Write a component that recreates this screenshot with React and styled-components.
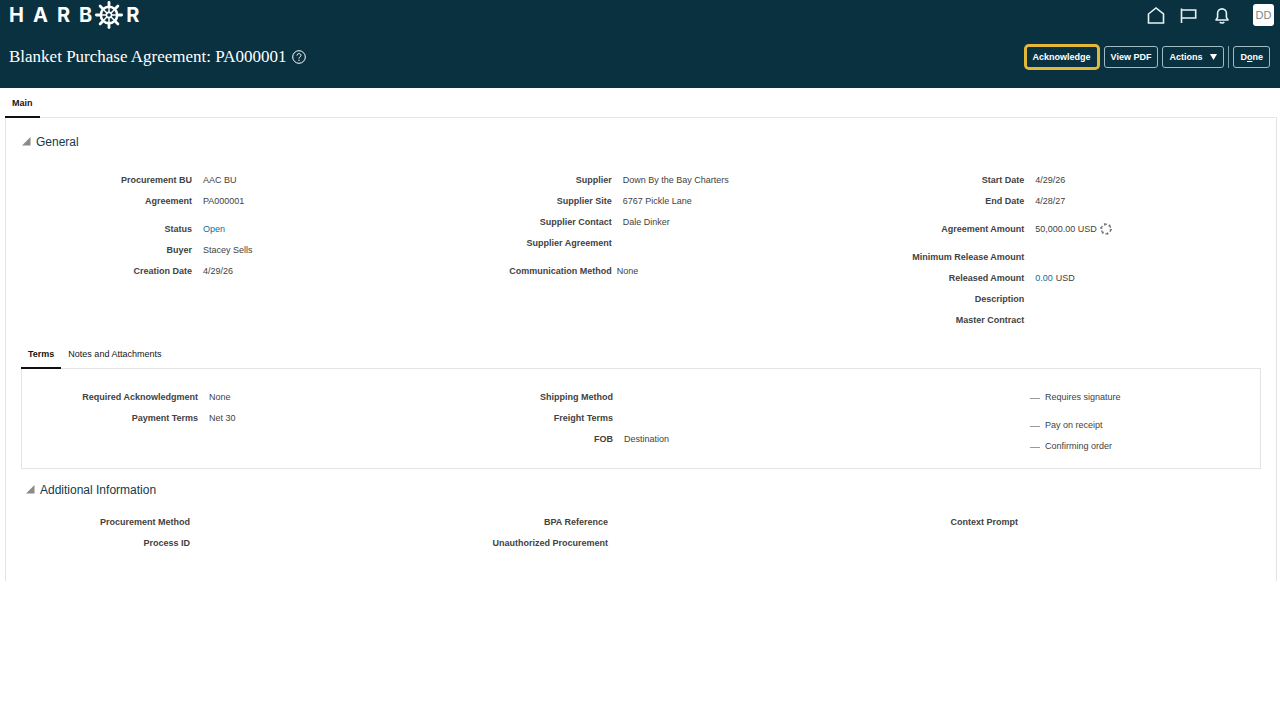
import { useState } from "react";
import styled, { createGlobalStyle, css } from "styled-components";

const GlobalStyle = createGlobalStyle`
  * {
    box-sizing: border-box;
  }
  body {
    margin: 0;
    background: #ffffff;
    color: #424242;
    font-family: "Liberation Sans", Arial, sans-serif;
    font-size: 9px;
    line-height: 12px;
  }
  button {
    font: inherit;
    color: inherit;
    cursor: pointer;
  }
  a {
    color: #0f6f99;
    text-decoration: none;
  }
`;

// Header
const Header = styled.header`
  background-color: #0a3140;
  color: white;
  height: 88px;
`;
const HeaderRow = styled.div`
  display: flex;
  align-items: center;
  justify-content: space-between;
`;
const TopBar = styled(HeaderRow)`
  height: 30px;
  padding: 0 6px 0 9px;
`;
const TitleBar = styled(HeaderRow)`
  height: 54px;
  padding: 0 10px 0 9px;
`;
const Logo = styled.a`
  display: flex;
  align-items: center;
  gap: 2px;
  color: white;
  font-family: Inter, sans-serif;
  font-size: 20px;
  font-weight: 700;
  line-height: 30px;
`;
const Letters = styled.span`
  display: flex;
  gap: 9px;
`;
const IconBar = styled.nav`
  display: flex;
  align-items: center;
`;
const IconButton = styled.button`
  display: flex;
  padding: 0;
  margin-right: 13px;
  border: 0;
  background: none;
  color: #e6f3f5;
`;
const Avatar = styled.button`
  width: 21px;
  height: 22px;
  margin-left: 8px;
  padding: 0;
  border: 0;
  border-radius: 3px;
  background-color: white;
  && {
    font-size: 11px;
    color: #7d878b;
  }
`;
const PageTitle = styled.h1`
  display: flex;
  align-items: center;
  gap: 6px;
  margin: 0;
  font-family: Georgia, "Liberation Serif", serif;
  font-size: 17px;
  font-weight: 400;
  line-height: 20px;
`;
const Toolbar = styled.div`
  display: flex;
  align-items: center;
  gap: 4px;
`;
const ToolButton = styled.button`
  display: flex;
  align-items: center;
  gap: 8px;
  height: 22px;
  padding: 0 6px;
  border: 1px solid #9dbcc6;
  border-radius: 3px;
  background: none;
  && {
    color: white;
    font-weight: 700;
  }
  ${(props) =>
    props.$highlight &&
    css`
      height: 20px;
      padding: 0 5px;
      border-color: #0a3140;
      border-radius: 2px;
      margin-right: 3px;
      box-shadow: 0 0 0 3px #e3b83a;
    `}
`;
const Divider = styled.span`
  width: 1px;
  height: 22px;
  background-color: #7fa0ab;
`;

// Tabs
const TabList = styled.div`
  display: flex;
  height: 30px;
  border-bottom: 1px solid #e4e4e4;
`;
const MainTabs = styled(TabList)`
  margin: 0 3px 0 5px;
`;
const Tab = styled.button`
  height: 30px;
  padding: 2px 7px 0;
  border: 0;
  border-bottom: 2px solid ${(props) => (props.$active ? "#111111" : "transparent")};
  background: none;
  && {
    color: #161513;
    font-weight: ${(props) => (props.$active ? 700 : 400)};
  }
`;

// Content
const Panel = styled.main`
  margin: 0 3px 0 5px;
  padding: 14px 15px 28px;
  border: solid #e4e4e4;
  border-width: 0 1px;
`;
const SectionTitle = styled.h2`
  margin: 0 0 0 ${(props) => (props.$indent ? "4px" : "0")};
  font-size: 12px;
  font-weight: 400;
  line-height: 20px;
  color: #13394b;
`;
const Disclosure = styled.button`
  display: flex;
  align-items: center;
  gap: 5px;
  padding: 0;
  border: 0;
  background: none;
`;
const Columns = styled.div`
  display: grid;
  grid-template-columns: ${(props) => props.$tracks};
  margin-left: ${(props) => props.$inset || "0"};
`;
const General = styled(Columns)`
  padding: 17px 0 9px;
`;
const Additional = styled(Columns)`
  padding-top: 11px;
`;
const TermsBox = styled.section`
  margin-bottom: 11px;
  padding: 17px 0 12px;
  border: 1px solid #e4e4e4;
  border-top: 0;
`;
const FieldList = styled.dl`
  margin: 0;
`;
const Field = styled.div`
  display: flex;
  align-items: center;
  gap: ${(props) => (props.$tight ? "5px" : "11px")};
  height: ${(props) => (props.$tall ? "28px" : "21px")};
  padding-top: ${(props) => (props.$tall ? "7px" : "0")};
`;
const Label = styled.dt`
  width: ${(props) => props.$width || "170px"};
  flex-shrink: 0;
  text-align: right;
  font-weight: 700;
`;
const Value = styled.dd`
  display: flex;
  align-items: center;
  gap: 3px;
  margin: 0;
`;
const CheckField = styled.label`
  display: flex;
  align-items: center;
  gap: 5px;
  height: ${(props) => (props.$tall ? "28px" : "21px")};
  padding: ${(props) => (props.$tall ? "7px" : "0")} 0 0 181px;
`;
// An unchecked read-only box shows as a dash
const Check = styled.input`
  appearance: none;
  width: 10px;
  height: 5px;
  margin: 0;
  border-bottom: 1px solid #9a9a9a;
`;

const Wheel = () => (
  <svg width="30" height="28" viewBox="-15 -14 30 28" fill="none" stroke="currentColor" aria-hidden="true">
    <circle r="8.2" strokeWidth="2.6" />
    <circle r="2.6" strokeWidth="1.6" />
    {[0, 45, 90, 135, 180, 225, 270, 315].map((angle) => (
      <g key={angle} transform={`rotate(${angle})`}>
        <path d="M0 -2.6V-11" strokeWidth="1.5" />
        <path d="M0 -9.5V-12.6" strokeWidth="2.8" strokeLinecap="round" />
      </g>
    ))}
  </svg>
);

const HomeIcon = () => (
  <svg width="20" height="20" viewBox="0 0 20 20" fill="none" stroke="currentColor" strokeWidth="1.6">
    <path d="M2.500 9 10 3l7.500 6V18H2.500Z" />
  </svg>
);

const FlagIcon = () => (
  <svg width="20" height="20" viewBox="0 0 20 20" fill="none" stroke="currentColor" strokeWidth="1.6">
    <path d="M2.500 3.500V18M2.500 5h14.200v8H2.500" />
  </svg>
);

const BellIcon = () => (
  <svg width="20" height="20" viewBox="0 0 20 20" fill="none" stroke="currentColor" strokeWidth="1.6">
    <path d="M4 15h12l-1.600-2.600V8.300a4.400 4.400 0 0 0-8.800 0v4.100Z" strokeLinejoin="round" />
    <path d="M7.800 17c.8 1.400 3.600 1.400 4.400 0" />
  </svg>
);

const HelpIcon = () => (
  <svg width="14" height="14" viewBox="0 0 14 14" fill="none" stroke="currentColor" aria-label="Help">
    <circle cx="7" cy="7" r="6.300" />
    <path d="M5 5.600c0-2.700 4-2.600 4-.2 0 1.500-2 1.500-2 3.100M7 9.700v1.300" />
  </svg>
);

const CycleIcon = () => (
  <svg width="12" height="12" viewBox="0 0 12 12" fill="none" stroke="#777" aria-hidden="true">
    <circle cx="6" cy="6" r="4.800" strokeWidth="1.300" strokeDasharray="3 2.030" />
    <circle cx="6" cy="6" r="4.800" strokeWidth="2.300" strokeDasharray="1.200 3.830" />
  </svg>
);

const SectionHeading = ({ title, indent, open, onToggle }) => (
  <SectionTitle $indent={indent}>
    <Disclosure aria-expanded={open} onClick={onToggle}>
      <svg width="10" height="10" viewBox="0 0 10 10" aria-hidden="true">
        <path d="M9.500 0v8.500H1Z" fill="#8a8a8a" />
      </svg>
      {title}
    </Disclosure>
  </SectionTitle>
);

const Fields = ({ items, labelWidth }) => (
  <FieldList>
    {items.map((item) => (
      <Field key={item.label} $tall={item.tall} $tight={item.tight}>
        <Label $width={labelWidth}>{item.label}</Label>
        <Value>{item.value}</Value>
      </Field>
    ))}
  </FieldList>
);

const agreement = [
  { label: "Procurement BU", value: "AAC BU" },
  { label: "Agreement", value: "PA000001" },
  { label: "Status", value: <a href="#status">Open</a>, tall: true },
  { label: "Buyer", value: "Stacey Sells" },
  { label: "Creation Date", value: "4/29/26" },
];

const supplier = [
  { label: "Supplier", value: "Down By the Bay Charters" },
  { label: "Supplier Site", value: "6767 Pickle Lane" },
  { label: "Supplier Contact", value: "Dale Dinker" },
  { label: "Supplier Agreement" },
  { label: "Communication Method", value: "None", tall: true, tight: true },
];

const amounts = [
  { label: "Start Date", value: "4/29/26" },
  { label: "End Date", value: "4/28/27" },
  {
    label: "Agreement Amount",
    value: (
      <>
        50,000.00 USD
        <CycleIcon />
      </>
    ),
    tall: true,
  },
  { label: "Minimum Release Amount", tall: true },
  {
    label: "Released Amount",
    value: (
      <>
        <a href="#released">0.00</a>USD
      </>
    ),
  },
  { label: "Description" },
  { label: "Master Contract" },
];

const payment = [
  { label: "Required Acknowledgment", value: "None" },
  { label: "Payment Terms", value: "Net 30" },
];

const shipping = [
  { label: "Shipping Method" },
  { label: "Freight Terms" },
  { label: "FOB", value: "Destination" },
];

const App = () => {
  const [generalOpen, setGeneralOpen] = useState(true);
  const [additionalOpen, setAdditionalOpen] = useState(true);

  return (
    <>
      <GlobalStyle />
      <Header>
        <TopBar>
          <Logo href="#home">
            <Letters>
              <span>H</span>
              <span>A</span>
              <span>R</span>
              <span>B</span>
            </Letters>
            <Wheel />
            <span>R</span>
          </Logo>
          <IconBar>
            <IconButton aria-label="Home">
              <HomeIcon />
            </IconButton>
            <IconButton aria-label="Watchlist">
              <FlagIcon />
            </IconButton>
            <IconButton aria-label="Notifications">
              <BellIcon />
            </IconButton>
            <Avatar>DD</Avatar>
          </IconBar>
        </TopBar>
        <TitleBar>
          <PageTitle>
            Blanket Purchase Agreement: PA000001
            <HelpIcon />
          </PageTitle>
          <Toolbar>
            <ToolButton $highlight>Acknowledge</ToolButton>
            <ToolButton>View PDF</ToolButton>
            <ToolButton>
              Actions
              <svg width="7" height="6" viewBox="0 0 7 6" aria-hidden="true">
                <path d="M0 0h7L3.500 6Z" fill="currentColor" />
              </svg>
            </ToolButton>
            <Divider />
            <ToolButton>
              <span>
                D<u>o</u>ne
              </span>
            </ToolButton>
          </Toolbar>
        </TitleBar>
      </Header>

      <MainTabs role="tablist">
        <Tab role="tab" aria-selected="true" $active>
          Main
        </Tab>
      </MainTabs>

      <Panel>
        <SectionHeading title="General" open={generalOpen} onToggle={() => setGeneralOpen(!generalOpen)} />
        {generalOpen && (
          <General $tracks="420fr 413fr 407fr" $inset="1px">
            <Fields items={agreement} />
            <Fields items={supplier} />
            <Fields items={amounts} />
          </General>
        )}

        <TabList role="tablist">
          <Tab role="tab" aria-selected="true" $active>
            Terms
          </Tab>
          <Tab role="tab" aria-selected="false">
            Notes and Attachments
          </Tab>
        </TabList>
        <TermsBox>
          <Columns $tracks="415fr 412fr 411fr">
            <Fields items={payment} labelWidth="176px" />
            <Fields items={shipping} labelWidth="176px" />
            <div>
              <CheckField>
                <Check type="checkbox" disabled />
                Requires signature
              </CheckField>
              <CheckField $tall>
                <Check type="checkbox" disabled />
                Pay on receipt
              </CheckField>
              <CheckField>
                <Check type="checkbox" disabled />
                Confirming order
              </CheckField>
            </div>
          </Columns>
        </TermsBox>

        <SectionHeading
          title="Additional Information"
          indent
          open={additionalOpen}
          onToggle={() => setAdditionalOpen(!additionalOpen)}
        />
        {additionalOpen && (
          <Additional $tracks="418fr 410fr 412fr">
            <Fields items={[{ label: "Procurement Method" }, { label: "Process ID" }]} labelWidth="169px" />
            <Fields items={[{ label: "BPA Reference" }, { label: "Unauthorized Procurement" }]} labelWidth="169px" />
            <Fields items={[{ label: "Context Prompt" }]} labelWidth="169px" />
          </Additional>
        )}
      </Panel>
    </>
  );
};

export default App;
